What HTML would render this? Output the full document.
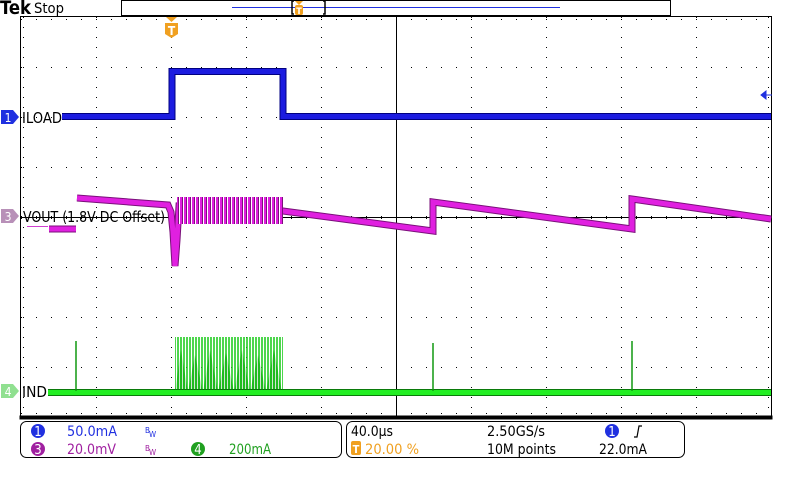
<!DOCTYPE html>
<html><head><meta charset="utf-8"><style>
html,body{margin:0;padding:0;background:#fff;width:800px;height:480px;overflow:hidden}
svg{display:block}
text{font-family:"DejaVu Sans Condensed","Liberation Sans",sans-serif}
</style></head><body>
<svg width="800" height="480" viewBox="0 0 800 480" xmlns="http://www.w3.org/2000/svg">
<defs>
<pattern id="mstr" width="4" height="30" patternUnits="userSpaceOnUse">
<rect x="0" y="0" width="2" height="30" fill="#e020e0"/><rect x="2" y="0" width="1" height="30" fill="#7a107a"/><rect x="3" y="0" width="1" height="30" fill="#fff"/>
</pattern>
<pattern id="gstr" width="3" height="60" patternUnits="userSpaceOnUse">
<rect x="0" y="0" width="2" height="60" fill="#22cc22"/><rect x="2" y="0" width="1" height="60" fill="#fff"/>
</pattern>
</defs>
<rect width="800" height="480" fill="#fff"/>
<!-- top bar -->
<text x="0" y="14" font-family="Liberation Serif,serif" font-weight="bold" font-size="19" textLength="31" lengthAdjust="spacingAndGlyphs">Tek</text>
<text x="34" y="13" font-size="14" textLength="30" lengthAdjust="spacingAndGlyphs">Stop</text>
<rect x="121.5" y="0.5" width="549" height="15" fill="none" stroke="#000"/>
<line x1="232" y1="7.5" x2="560" y2="7.5" stroke="#2030e0"/>
<path d="M294 1 H292 V14 H294 M323 1 H325 V14 H323" fill="none" stroke="#000" stroke-width="1.5"/>
<path d="M295 1 H303 L299 5 Z" fill="#f0a020"/><rect x="295" y="5" width="8" height="10" rx="2" fill="#f0a020"/>
<text x="299" y="14" font-size="9" fill="#fff" text-anchor="middle" font-weight="bold">T</text>
<!-- graticule -->
<g stroke="#000" stroke-width="1">
<line x1="20.5" y1="16" x2="20.5" y2="418"/>
<line x1="771.5" y1="16" x2="771.5" y2="418"/>
<line x1="20" y1="16.5" x2="772" y2="16.5"/>
<rect x="20" y="416" width="752" height="3" fill="#000"/>
<line x1="396.5" y1="17" x2="396.5" y2="416"/>
<line x1="21" y1="217.5" x2="771" y2="217.5"/>
</g>
<g stroke="#000" stroke-width="1" stroke-dasharray="1 9">
<line x1="96.5" y1="17" x2="96.5" y2="416"/><line x1="171.5" y1="17" x2="171.5" y2="416"/>
<line x1="246.5" y1="17" x2="246.5" y2="416"/><line x1="321.5" y1="17" x2="321.5" y2="416"/>
<line x1="471.5" y1="17" x2="471.5" y2="416"/><line x1="546.5" y1="17" x2="546.5" y2="416"/>
<line x1="621.5" y1="17" x2="621.5" y2="416"/><line x1="696.5" y1="17" x2="696.5" y2="416"/>
<line x1="23.5" y1="17" x2="23.5" y2="416"/><line x1="768.5" y1="17" x2="768.5" y2="416"/>
</g>
<g stroke="#000" stroke-width="1" stroke-dasharray="1 14">
<line x1="21" y1="67.5" x2="771" y2="67.5"/><line x1="21" y1="117.5" x2="771" y2="117.5"/>
<line x1="21" y1="167.5" x2="771" y2="167.5"/><line x1="21" y1="267.5" x2="771" y2="267.5"/>
<line x1="21" y1="317.5" x2="771" y2="317.5"/><line x1="21" y1="367.5" x2="771" y2="367.5"/>
<line x1="21" y1="19.5" x2="771" y2="19.5"/><line x1="21" y1="413.5" x2="771" y2="413.5"/>
</g>
<g stroke="#000" stroke-width="3" stroke-dasharray="1 14">
<line x1="21" y1="217.5" x2="771" y2="217.5"/>
</g>
<!-- trigger marker -->
<path d="M166 17 H177 L171.5 22 Z" fill="#f0a020"/>
<path d="M165 23 H178 V34 L171.5 38 L165 34 Z" fill="#f0a020"/>
<text x="171.5" y="35" font-size="12" fill="#fff" text-anchor="middle" font-weight="bold">T</text>
<!-- blue trace -->
<g fill="none" stroke-linejoin="miter">
<path d="M62 116.5 H172 V71.5 H283 V116.5 H771" stroke="#000080" stroke-width="7"/>
<path d="M62 116.5 H172 V71.5 H283 V116.5 H771" stroke="#1c1ce0" stroke-width="5"/>
</g>
<path d="M772 95 L762 95 M766 91 L761 95 L766 99 Z" fill="#2030e0" stroke="#2030e0"/>
<!-- magenta trace -->
<line x1="27" y1="226.5" x2="48" y2="226.5" stroke="#d040d0" stroke-width="1"/>
<g fill="none" stroke-linejoin="miter">
<path d="M49 229 H76 M77 198 L168 205 L171 212 L173 232 L175 266 L177 240 L179 206 L283 211 L433 231 V202 L632 229 V199 L771 219" stroke="#7a107a" stroke-width="7"/>
<path d="M49 229 H76 M77 198 L168 205 L171 212 L173 232 L175 266 L177 240 L179 206 L283 211 L433 231 V202 L632 229 V199 L771 219" stroke="#e020e0" stroke-width="5"/>
</g>
<rect x="177" y="197" width="106" height="27" fill="url(#mstr)"/>
<!-- green trace -->
<polygon points="175,392 181,350 188,392 195,355 203,392 210,350 218,392 226,353 234,392 242,350 250,392 258,355 266,392 274,350 282,392" fill="#117711"/>
<rect x="175" y="337" width="108" height="54" fill="url(#gstr)" opacity="0.8"/>
<rect x="48" y="389" width="723" height="7" fill="#0a7a0a"/>
<rect x="48" y="390" width="723" height="5" fill="#22ee22"/>
<g stroke="#119911" stroke-width="1.5">
<line x1="76" y1="391" x2="76" y2="341"/><line x1="433" y1="391" x2="433" y2="343"/><line x1="632" y1="391" x2="632" y2="341"/>
</g>
<!-- channel markers & labels -->
<path d="M1 110 H13 L19 117 L13 124 H1 Z" fill="#2030e0"/>
<text x="8" y="122" font-size="12" fill="#fff" text-anchor="middle">1</text>
<path d="M1 209 H13 L19 216 L13 223 H1 Z" fill="#b890b8"/>
<text x="8" y="221" font-size="12" fill="#fff" text-anchor="middle">3</text>
<path d="M1 384 H13 L19 391 L13 398 H1 Z" fill="#90e090"/>
<text x="8" y="396" font-size="12" fill="#fff" text-anchor="middle">4</text>
<text x="22" y="123" font-size="15" textLength="40" lengthAdjust="spacingAndGlyphs">ILOAD</text>
<text x="23" y="222" font-size="15" textLength="142" lengthAdjust="spacingAndGlyphs">VOUT (1.8V DC Offset)</text>
<text x="22" y="397" font-size="15" textLength="25" lengthAdjust="spacingAndGlyphs">IND</text>
<!-- bottom panels -->
<rect x="20.5" y="421.5" width="321" height="36" rx="6" fill="none" stroke="#000"/>
<rect x="346.5" y="421.5" width="338" height="36" rx="6" fill="none" stroke="#000"/>
<circle cx="38" cy="431" r="7" fill="#2030e0"/><text x="38" y="436" font-size="13" fill="#fff" text-anchor="middle">1</text>
<text x="67" y="436" font-size="14" fill="#2030e0" textLength="50" lengthAdjust="spacingAndGlyphs">50.0mA</text>
<text x="145" y="433" font-size="8" fill="#2030e0">B</text><text x="149" y="437" font-size="8" fill="#2030e0">W</text>
<circle cx="38" cy="449" r="7" fill="#a020a0"/><text x="38" y="454" font-size="13" fill="#fff" text-anchor="middle">3</text>
<text x="67" y="454" font-size="14" fill="#a020a0" textLength="49" lengthAdjust="spacingAndGlyphs">20.0mV</text>
<text x="145" y="451" font-size="8" fill="#a020a0">B</text><text x="149" y="455" font-size="8" fill="#a020a0">W</text>
<circle cx="198" cy="449" r="7" fill="#20a020"/><text x="198" y="454" font-size="13" fill="#fff" text-anchor="middle">4</text>
<text x="229" y="454" font-size="14" fill="#20a020" textLength="42" lengthAdjust="spacingAndGlyphs">200mA</text>
<text x="351" y="436" font-size="14" textLength="42" lengthAdjust="spacingAndGlyphs">40.0µs</text>
<text x="487" y="436" font-size="14" textLength="58" lengthAdjust="spacingAndGlyphs">2.50GS/s</text>
<circle cx="612" cy="431" r="7" fill="#2030e0"/><text x="612" y="436" font-size="13" fill="#fff" text-anchor="middle">1</text>
<path d="M634 437 L637 437 L639 426 L642 426" fill="none" stroke="#000" stroke-width="1.2"/>
<rect x="351" y="441" width="10" height="14" rx="2" fill="#f0a020"/><text x="356" y="453" font-size="11" fill="#fff" text-anchor="middle" font-weight="bold">T</text>
<text x="365" y="454" font-size="14" fill="#f0a020" textLength="54" lengthAdjust="spacingAndGlyphs">20.00 %</text>
<text x="487" y="454" font-size="14" textLength="69" lengthAdjust="spacingAndGlyphs">10M points</text>
<text x="599" y="454" font-size="14" textLength="48" lengthAdjust="spacingAndGlyphs">22.0mA</text>
</svg>
</body></html>
